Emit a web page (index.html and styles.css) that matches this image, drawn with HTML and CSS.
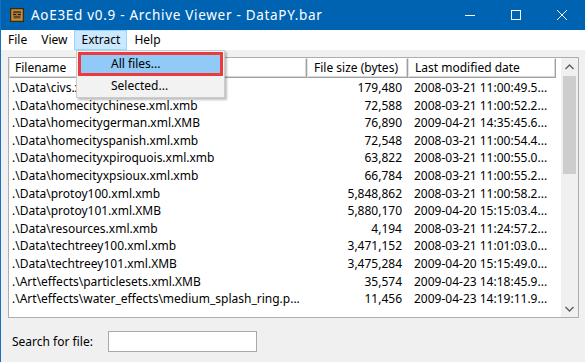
FILE: index.html
```html
<!DOCTYPE html>
<html lang="en">
<head>
  <meta charset="UTF-8">
  <title>AoE3Ed v0.9 - Archive Viewer - DataPY.bar</title>
  <link rel="stylesheet" href="styles.css">
</head>
<body>
  <div class="window">
    <!-- 标题栏 -->
    <div class="titlebar">
      <svg class="appicon" width="14" height="14" viewBox="0 0 14 14">
        <rect x="0.5" y="0.5" width="13" height="13" fill="#6b4a1e" stroke="#3a2a10"/>
        <rect x="2" y="2" width="10" height="10" fill="#a07032" stroke="#e0b860" stroke-width="0.8"/>
        <path d="M3 4h8M3 6.5h3M8 6.5h3M4 9h6" stroke="#2a1c08" stroke-width="1.2"/>
      </svg>
      <span class="title">AoE3Ed v0.9 - Archive Viewer - DataPY.bar</span>
      <div class="controls">
        <span class="ctl"><svg width="10" height="10" viewBox="0 0 10 10"><path d="M0 5.5h10" stroke="#fff"/></svg></span>
        <span class="ctl"><svg width="10" height="10" viewBox="0 0 10 10"><rect x="0.5" y="0.5" width="9" height="9" fill="none" stroke="#fff"/></svg></span>
        <span class="ctl"><svg width="10" height="10" viewBox="0 0 10 10"><path d="M0 0L10 10M10 0L0 10" stroke="#fff"/></svg></span>
      </div>
    </div>
    <!-- 菜单栏 -->
    <div class="menubar">
      <span class="mitem">File</span>
      <span class="mitem">View</span>
      <span class="mitem open">Extract</span>
      <span class="mitem">Help</span>
    </div>
    <!-- 下拉菜单 -->
    <div class="popup">
      <div class="pitem hot">All files...</div>
      <div class="pitem">Selected...</div>
    </div>
    <div class="client">
      <!-- 文件列表 -->
      <div class="listview">
        <div class="listarea">
          <div class="row head">
            <div class="c1">Filename</div>
            <div class="c2">File size (bytes)</div>
            <div class="c3">Last modified date</div>
          </div>
          <div class="rows">
            <div class="row"><div class="c1">.\Data\civs.xml.xmb</div><div class="c2">179,480</div><div class="c3">2008-03-21 11:00:49.5...</div></div>
            <div class="row"><div class="c1">.\Data\homecitychinese.xml.xmb</div><div class="c2">72,588</div><div class="c3">2008-03-21 11:00:52.2...</div></div>
            <div class="row"><div class="c1">.\Data\homecitygerman.xml.XMB</div><div class="c2">76,890</div><div class="c3">2009-04-21 14:35:45.6...</div></div>
            <div class="row"><div class="c1">.\Data\homecityspanish.xml.xmb</div><div class="c2">72,548</div><div class="c3">2008-03-21 11:00:54.4...</div></div>
            <div class="row"><div class="c1">.\Data\homecityxpiroquois.xml.xmb</div><div class="c2">63,822</div><div class="c3">2008-03-21 11:00:55.0...</div></div>
            <div class="row"><div class="c1">.\Data\homecityxpsioux.xml.xmb</div><div class="c2">66,784</div><div class="c3">2008-03-21 11:00:55.2...</div></div>
            <div class="row"><div class="c1">.\Data\protoy100.xml.xmb</div><div class="c2">5,848,862</div><div class="c3">2008-03-21 11:00:58.2...</div></div>
            <div class="row"><div class="c1">.\Data\protoy101.xml.XMB</div><div class="c2">5,880,170</div><div class="c3">2009-04-20 15:15:03.4...</div></div>
            <div class="row"><div class="c1">.\Data\resources.xml.xmb</div><div class="c2">4,194</div><div class="c3">2008-03-21 11:24:57.2...</div></div>
            <div class="row"><div class="c1">.\Data\techtreey100.xml.xmb</div><div class="c2">3,471,152</div><div class="c3">2008-03-21 11:01:03.0...</div></div>
            <div class="row"><div class="c1">.\Data\techtreey101.xml.XMB</div><div class="c2">3,475,284</div><div class="c3">2009-04-20 15:15:49.0...</div></div>
            <div class="row"><div class="c1">.\Art\effects\particlesets.xml.XMB</div><div class="c2">35,574</div><div class="c3">2009-04-23 14:18:45.9...</div></div>
            <div class="row"><div class="c1">.\Art\effects\water_effects\medium_splash_ring.p...</div><div class="c2">11,456</div><div class="c3">2009-04-23 14:19:11.9...</div></div>
          </div>
        </div>
        <!-- 滚动条 -->
        <div class="vscroll">
          <div class="arrow"><svg width="9" height="6" viewBox="0 0 9 6"><path d="M0.5 5L4.5 1L8.5 5" fill="none" stroke="#606060" stroke-width="1.4"/></svg></div>
          <div class="track"><div class="thumb"></div></div>
          <div class="arrow"><svg width="9" height="6" viewBox="0 0 9 6"><path d="M0.5 1L4.5 5L8.5 1" fill="none" stroke="#606060" stroke-width="1.4"/></svg></div>
        </div>
      </div>
      <!-- 搜索 -->
      <div class="search">
        <label>Search for file:</label>
        <input type="text">
      </div>
    </div>
  </div>
</body>
</html>
```

FILE: styles.css
```css
/* 清除默认样式 */
* {
  margin: 0;
  padding: 0;
  box-sizing: border-box;
}
body {
  width: 585px;
  height: 362px;
  overflow: hidden;
  font: 12px "Noto Sans", "Liberation Sans", sans-serif;
  color: #000;
}
.window {
  position: relative;
  height: 362px;
  border-left: 1px solid #1a6ec0;
  background-color: #f0f0f0;
}
/* 标题栏 */
.titlebar {
  display: flex;
  align-items: center;
  height: 30px;
  background-color: #0063b1;
  color: #fff;
}
.appicon {
  margin: 0 7px 0 9px;
}
.title {
  font-size: 13.5px;
  letter-spacing: 0.7px;
  flex: 1;
}
.controls {
  display: flex;
  height: 30px;
}
.ctl {
  display: flex;
  width: 46px;
  align-items: center;
  justify-content: center;
}
/* 菜单栏 */
.menubar {
  display: flex;
  height: 20px;
  background-color: #fff;
}
.mitem {
  padding: 0 6px;
  line-height: 18px;
  border: 1px solid transparent;
}
.mitem.open {
  background-color: #cce8ff;
  border-color: #99d1ff;
}
.popup {
  position: absolute;
  left: 75px;
  top: 50px;
  width: 149px;
  height: 48px;
  padding: 2px;
  background-color: #f2f2f2;
  border: 1px solid #cccccc;
  box-shadow: 2px 2px 2px rgba(0,0,0,0.25);
  z-index: 2;
}
.pitem {
  height: 22px;
  line-height: 22px;
  padding-left: 32px;
}
.pitem.hot {
  background-color: #91c9f7;
  outline: 3px solid #ec3a3f;
  outline-offset: -2px;
}
/* 客户区 */
.client {
  padding: 7px 6px 0 7px;
}
.listview {
  display: flex;
  height: 261px;
  background-color: #fff;
  border: 1px solid #adadad;
}
.listarea {
  flex: 1;
  overflow: hidden;
}
.row {
  display: flex;
  height: 17.6px;
  line-height: 17.6px;
  white-space: nowrap;
}
.row .c1 {
  width: 298px;
  padding-left: 3px;
  overflow: hidden;
}
.row .c2 {
  width: 101px;
  padding-right: 6px;
  text-align: right;
}
.row .c3 {
  width: 148px;
  padding-left: 6px;
}
.row.head {
  height: 20px;
  line-height: 18px;
  margin-bottom: 1px;
}
.row.head div {
  border: 1px solid;
  border-color: #fff #a0a0a0 #a0a0a0 #e3e3e3;
  box-shadow: inset -1px -1px #d8d8d8;
}
.row.head .c1 {
  padding-left: 5px;
}
.row.head .c2 {
  text-align: left;
  padding-left: 6px;
}
/* 滚动条 */
.vscroll {
  display: flex;
  flex-direction: column;
  width: 17px;
  background-color: #f0f0f0;
}
.vscroll .arrow {
  display: flex;
  height: 17px;
  align-items: center;
  justify-content: center;
}
.vscroll .track {
  flex: 1;
  padding: 1px 2px;
}
.vscroll .thumb {
  height: 98px;
  background-color: #cdcdcd;
}
/* 搜索 */
.search {
  display: flex;
  align-items: center;
  padding-top: 13px;
}
.search label {
  width: 100px;
  padding-left: 4px;
}
.search input {
  width: 149px;
  height: 21px;
  border: 1px solid #a9a9a9;
  background-color: #fff;
  outline: none;
}
```
